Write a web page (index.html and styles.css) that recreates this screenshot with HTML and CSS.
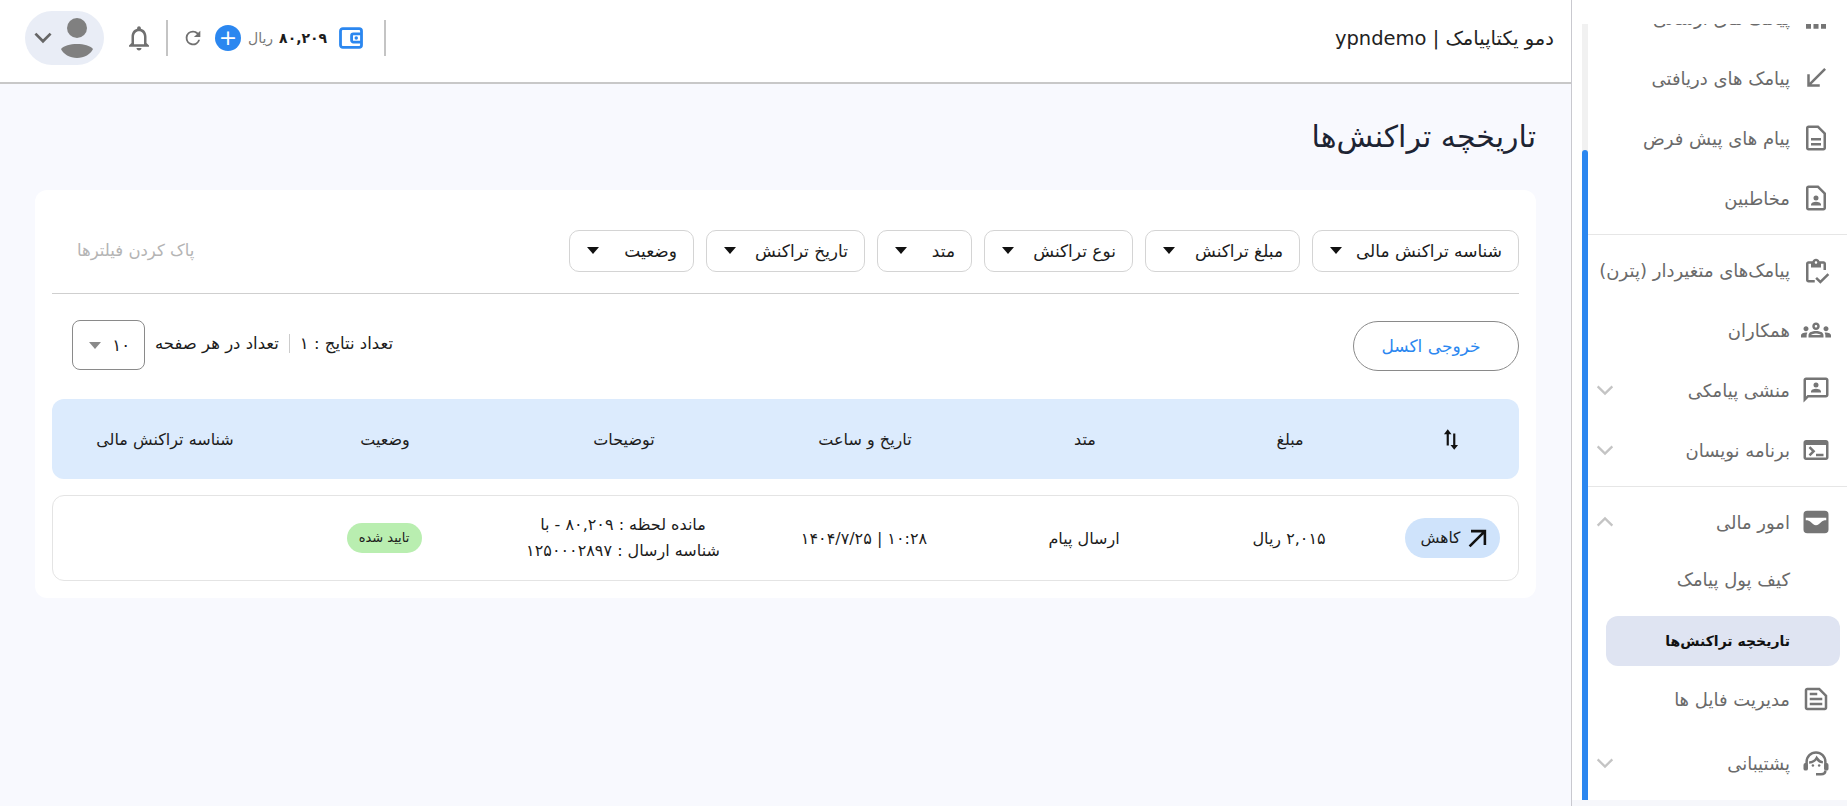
FILE: index.html
```html
<!DOCTYPE html>
<html lang="fa" dir="rtl">
<head>
  <meta charset="UTF-8" />
  <title>تاریخچه تراکنش‌ها</title>
  <link rel="stylesheet" href="styles.css">
</head>
<body>
  <div class="app">
    <aside class="sidebar">
      <div class="side-scroll">
        <div class="scroll-thumb"></div>
        <nav class="side-list">
          <div class="side-item cut">
            <svg class="ico" viewBox="0 0 24 24"><path d="M4 16.500h4v4H4zM10 16.500h4v4h-4zM16 16.500h4v4h-4z"/></svg>
            <span>پیامک های ارسالی</span>
          </div>
          <div class="side-item">
            <svg class="ico" viewBox="0 0 24 24"><path d="M20 5.410L18.590 4 7 15.590V9H5v10h10v-2H8.410z"/></svg>
            <span>پیامک های دریافتی</span>
          </div>
          <div class="side-item">
            <svg class="ico" viewBox="0 0 24 24"><path d="M8 16h8v2H8zm0-4h8v2H8zm6-10H6c-1.100 0-2 .9-2 2v16c0 1.100.89 2 1.990 2H18c1.100 0 2-.9 2-2V8l-6-6zm4 18H6V4h7.170L18 8.830V20z"/></svg>
            <span>پیام های پیش فرض</span>
          </div>
          <div class="side-item">
            <svg class="ico" viewBox="0 0 24 24"><path d="M14 2H6c-1.100 0-2 .9-2 2v16c0 1.100.9 2 2 2h12c1.100 0 2-.9 2-2V8l-6-6zM6 20V4h7.170L18 8.830V20H6zM12 14a2 2 0 1 0 0-4 2 2 0 0 0 0 4zm4 3.430c0-.81-.48-1.530-1.220-1.850A6.950 6.950 0 0 0 12 15c-.99 0-1.930.21-2.780.58A2.010 2.010 0 0 0 8 17.430V18h8v-.57z"/></svg>
            <span>مخاطبین</span>
          </div>
          <hr class="side-line">
          <div class="side-item">
            <svg class="ico" viewBox="0 0 24 24"><path d="M18 5h-3.200C14.400 3.800 13.300 3 12 3s-2.400.8-2.800 2H6c-1.100 0-2 .9-2 2v13c0 1.100.9 2 2 2h5v-2H6V7h2v3h8V7h2v5h2V7c0-1.100-.9-2-2-2zm-6 2c-.55 0-1-.45-1-1s.45-1 1-1 1 .45 1 1-.45 1-1 1zm3.500 13.200L12.800 17.500l-1.400 1.400 4.100 4.100 7.100-7.100-1.400-1.400z"/></svg>
            <span>پیامک‌های متغیردار (پترن)</span>
          </div>
          <div class="side-item">
            <svg class="ico" viewBox="0 0 24 24"><path d="M4 13c1.100 0 2-.9 2-2s-.9-2-2-2-2 .9-2 2 .9 2 2 2zm1.130 1.100c-.37-.06-.74-.1-1.130-.1-.99 0-1.930.21-2.780.58C.48 14.900 0 15.620 0 16.430V18h4.500v-1.610c0-.83.23-1.610.63-2.290zM20 13c1.100 0 2-.9 2-2s-.9-2-2-2-2 .9-2 2 .9 2 2 2zm4 3.430c0-.81-.48-1.530-1.220-1.850-.85-.37-1.790-.58-2.780-.58-.39 0-.76.04-1.130.1.4.68.63 1.460.63 2.290V18H24v-1.570zM16.240 13.650c-1.170-.52-2.610-.9-4.240-.9-1.630 0-3.070.39-4.240.9C6.680 14.130 6 15.210 6 16.390V18h12v-1.610c0-1.180-.68-2.260-1.760-2.740zM8.070 16c.09-.23.13-.39.91-.69.97-.38 1.990-.56 3.020-.56s2.050.18 3.020.56c.77.3.81.46.91.69H8.070zM12 8c.55 0 1 .45 1 1s-.45 1-1 1-1-.45-1-1 .45-1 1-1m0-2c-1.660 0-3 1.340-3 3s1.340 3 3 3 3-1.340 3-3-1.340-3-3-3z"/></svg>
            <span>همکاران</span>
          </div>
          <div class="side-item">
            <svg class="ico" viewBox="0 0 24 24"><path d="M20 2H4c-1.100 0-2 .9-2 2v18l4-4h14c1.100 0 2-.9 2-2V4c0-1.100-.9-2-2-2zm0 14H5.200L4 17.200V4h16v12zM12 10a2 2 0 1 0 0-4 2 2 0 0 0 0 4zm4 3.400c0-.8-.5-1.500-1.200-1.800a7 7 0 0 0-5.600 0c-.7.3-1.200 1-1.200 1.800v.6h8v-.6z"/></svg>
            <span>منشی پیامکی</span>
            <svg class="chev" viewBox="0 0 24 24"><path d="M4 8l8 8 8-8"/></svg>
          </div>
          <div class="side-item">
            <svg class="ico" viewBox="0 0 24 24"><path d="M20 4H4c-1.110 0-2 .9-2 2v12c0 1.100.89 2 2 2h16c1.100 0 2-.9 2-2V6c0-1.100-.89-2-2-2zm0 14H4V8h16v10zm-2-1h-6v-2h6v2zM7.500 17l-1.410-1.410L8.670 13l-2.590-2.590L7.500 9l4 4-4 4z"/></svg>
            <span>برنامه نویسان</span>
            <svg class="chev" viewBox="0 0 24 24"><path d="M4 8l8 8 8-8"/></svg>
          </div>
          <hr class="side-line">
          <div class="side-item">
            <svg class="ico" viewBox="0 0 24 24"><path fill-rule="evenodd" d="M5 3h14a3 3 0 0 1 3 3v12a3 3 0 0 1-3 3H5a3 3 0 0 1-3-3V6a3 3 0 0 1 3-3zM3.800 8.500v2c2 0 3 .5 4 1.500 1.500 1.500 2.600 2.500 4.200 2.500s2.700-1 4.200-2.500c1-1 2-1.500 4-1.500v-2z"/></svg>
            <span>امور مالی</span>
            <svg class="chev" viewBox="0 0 24 24"><path d="M4 16l8-8 8 8"/></svg>
          </div>
          <div class="side-item sub"><span>کیف پول پیامک</span></div>
          <div class="side-item sub active"><span>تاریخچه تراکنش‌ها</span></div>
          <div class="side-item after-active">
            <svg class="ico" viewBox="0 0 24 24"><path d="M19 3H5c-1.100 0-2 .9-2 2v14c0 1.100.9 2 2 2h14c1.100 0 2-.9 2-2V9l-6-6zm0 16H5V5h9.200L19 9.800V19zM7 11h10v2H7zm0 4h10v2H7zm0-8h6v2H7z"/></svg>
            <span>مدیریت فایل ها</span>
          </div>
          <div class="side-item last">
            <svg class="ico" viewBox="0 0 24 24"><path class="line" d="M4.500 17v-6a7.500 7.500 0 0 1 15 0v6M6.500 11.500c2.800 0 4.700-1.200 6-3.500 1.200 2 2.800 3.200 5 3.500M19.500 18c0 2-1.500 3-3.500 3h-4"/><rect x="2" y="12" width="3.500" height="6" rx="1.500"/><rect x="18.500" y="12" width="3.500" height="6" rx="1.500"/><circle cx="9.500" cy="14" r="1"/><circle cx="14.500" cy="14" r="1"/></svg>
            <span>پشتیبانی</span>
            <svg class="chev" viewBox="0 0 24 24"><path d="M4 8l8 8 8-8"/></svg>
          </div>
        </nav>
      </div>
    </aside>

    <main class="main">
      <header class="topbar">
        <div class="brand">دمو یکتاپیامک | ypndemo</div>
        <div class="tools">
          <span class="vline"></span>
          <svg class="wallet" viewBox="0 0 24 24"><rect x="3" y="4" width="18" height="16" rx="2" fill="none" stroke="#2b87f0" stroke-width="2.400"/><path d="M21 8.500h-7a1.500 1.500 0 0 0-1.500 1.500v4a1.500 1.500 0 0 0 1.500 1.500h7" fill="none" stroke="#2b87f0" stroke-width="2.400"/><circle cx="16.500" cy="12" r="1.500" fill="#2b87f0"/></svg>
          <div class="balance"><b>۸۰,۲۰۹</b><span>ریال</span></div>
          <span class="plus">+</span>
          <svg class="refresh" viewBox="0 0 24 24"><path d="M17.650 6.350A7.960 7.960 0 0 0 12 4a8 8 0 1 0 7.730 10h-2.080A6 6 0 1 1 12 6c1.660 0 3.140.69 4.220 1.780L13 11h7V4l-2.350 2.350z"/></svg>
          <span class="vline short"></span>
          <svg class="bell" viewBox="0 0 24 24"><path d="M12 22c1.100 0 2-.9 2-2h-4c0 1.100.9 2 2 2zm6-6v-5c0-3.070-1.630-5.640-4.500-6.320V4c0-.83-.67-1.500-1.500-1.500s-1.500.67-1.500 1.500v.68C7.640 5.360 6 7.920 6 11v5l-2 2v1h16v-1l-2-2zm-2 1H8v-6c0-2.480 1.510-4.500 4-4.500s4 2.020 4 4.500v6z"/></svg>
          <div class="avatar">
            <svg class="person" viewBox="0 0 32 40"><circle cx="16" cy="10" r="10"/><path d="M16 26c-7 0-13 1.500-16 5 2 5 9 9 16 9s14-4 16-9c-3-3.500-9-5-16-5z"/></svg>
            <svg class="avatar-chev" viewBox="0 0 24 24"><path d="M5 8l7 7 7-7"/></svg>
          </div>
        </div>
      </header>

      <section class="content">
        <h1 class="page-title">تاریخچه تراکنش‌ها</h1>
        <div class="card">
          <div class="filters">
            <div class="chip c1">شناسه تراکنش مالی<i></i></div>
            <div class="chip c2">مبلغ تراکنش<i></i></div>
            <div class="chip c3">نوع تراکنش<i></i></div>
            <div class="chip c4">متد<i></i></div>
            <div class="chip c5">تاریخ تراکنش<i></i></div>
            <div class="chip c6">وضعیت<i></i></div>
            <div class="clear">پاک کردن فیلترها</div>
          </div>
          <div class="tools-row">
            <button class="excel">خروجی اکسل</button>
            <div class="page-info">
              <span class="total">تعداد نتایج : ۱</span>
              <span class="per">تعداد در هر صفحه</span>
              <div class="per-select">۱۰<i></i></div>
            </div>
          </div>
          <div class="grid head">
            <div><svg class="sort" viewBox="0 0 24 24"><path d="M9 3L5.500 7.500H8V18h2V7.500h2.500zM15 22l3.500-4.500H16V7h-2v10.500h-2.500z"/></svg></div>
            <div>مبلغ</div>
            <div>متد</div>
            <div>تاریخ و ساعت</div>
            <div>توضیحات</div>
            <div>وضعیت</div>
            <div>شناسه تراکنش مالی</div>
          </div>
          <div class="grid row">
            <div>
              <span class="kind"><svg viewBox="0 0 24 24"><path d="M6 5v2.200h9.200L4 18.400 5.600 20 16.800 8.800V18H19V5z"/></svg>کاهش</span>
            </div>
            <div>۲,۰۱۵ ریال</div>
            <div>ارسال پیام</div>
            <div>۱۰:۲۸ | ۱۴۰۴/۷/۲۵</div>
            <div class="desc">مانده لحظه : ۸۰,۲۰۹ - با شناسه ارسال : ۱۲۵۰۰۰۲۸۹۷</div>
            <div><span class="status">تایید شده</span></div>
            <div></div>
          </div>
        </div>
      </section>
    </main>
  </div>
</body>
</html>
```

FILE: styles.css
```css
* {
  box-sizing: border-box;
}

html, body {
  margin: 0;
  height: 100%;
  overflow: hidden;
}

body {
  font-family: "DejaVu Sans", sans-serif;
  font-size: 16px;
  color: #1c1c1c;
  background: #fff;
}

.app {
  display: flex;
  height: 806px;
}

/* sidebar */
.sidebar {
  width: 276px;
  flex: none;
  border-left: 1px solid #c9c9cf;
  padding: 24px 0 6px 10px;
  background: linear-gradient(#fff 800px, #f6f7fb 800px);
}

.side-scroll {
  position: relative;
  height: 100%;
  overflow: hidden;
  padding-left: 6px;
  background: linear-gradient(#f1f1f1, #f1f1f1) left top / 6px 100% no-repeat;
}

.scroll-thumb {
  position: absolute;
  left: 0;
  top: 126px;
  bottom: 0;
  width: 6px;
  background: #2b87f0;
  border-radius: 3px 3px 0 0;
}

.side-list {
  margin-top: -36px;
}

.side-item {
  display: flex;
  align-items: center;
  height: 60px;
  padding: 0 16px 0 0;
  color: #6a6a6a;
  font-size: 18px;
}

.side-item span {
  flex: 1;
}

.ico {
  width: 30px;
  height: 30px;
  fill: #757575;
  flex: none;
  margin-left: 11px;
}

.ico .line {
  fill: none;
  stroke: #757575;
  stroke-width: 2;
}

.chev {
  width: 22px;
  height: 22px;
  fill: none;
  stroke: #c4c4c4;
  stroke-width: 2.5;
  flex: none;
  margin-left: 6px;
}

.side-line {
  border: 0;
  border-top: 1px solid #e6e6e6;
  margin: 6px 0 5px;
}

.side-item.sub {
  height: 54px;
  padding-right: 57px;
}

.side-item.active {
  height: 50px;
  width: 234px;
  margin: 10px 7px 3px 0;
  padding-right: 50px;
  background: #dfe4f2;
  border-radius: 12px;
  color: #111;
  font-size: 14px;
  font-weight: 700;
}

.side-item.last {
  margin-top: 4px;
}

/* main */
.main {
  flex: 1;
  min-width: 0;
  background: #f8f9fe;
  display: flex;
  flex-direction: column;
}

.topbar {
  height: 84px;
  flex: none;
  background: #fff;
  border-bottom: 2px solid #c8c8c8;
  display: flex;
  align-items: center;
  justify-content: space-between;
  padding: 0 17px 6px 25px;
}

.brand {
  font-size: 19.5px;
  color: #222;
}

.tools {
  display: flex;
  align-items: center;
}

.vline {
  width: 2px;
  height: 36px;
  background: #c4c4c4;
  margin-left: 19px;
}

.vline.short {
  margin: 0 14px 0 12px;
}

.wallet {
  width: 28px;
  height: 28px;
  margin-left: 10px;
}

.balance {
  display: flex;
  align-items: center;
  gap: 6px;
  margin-left: 7px;
  font-size: 14px;
}

.balance span {
  color: #777;
}

.plus {
  width: 26px;
  height: 26px;
  border-radius: 50%;
  background: #2b87f0;
  color: #fff;
  font-size: 22px;
  line-height: 25px;
  text-align: center;
  margin-left: 11px;
}

.refresh {
  width: 22px;
  height: 22px;
  fill: #707070;
}

.bell {
  width: 30px;
  height: 30px;
  fill: #707070;
  margin-left: 20px;
}

.avatar {
  width: 79px;
  height: 54px;
  border-radius: 27px;
  background: #e9edf6;
  display: flex;
  align-items: center;
  padding-right: 11px;
}

.person {
  width: 32px;
  height: 40px;
  fill: #808080;
}

.avatar-chev {
  width: 26px;
  height: 26px;
  fill: none;
  stroke: #666;
  stroke-width: 2.5;
  margin-right: 5px;
}

.content {
  padding: 0 35px;
}

.page-title {
  font-size: 30px;
  font-weight: 500;
  margin: 34px 0 34px;
  line-height: 38px;
  color: #1d2433;
}

.card {
  background: #fff;
  border-radius: 12px;
  padding: 40px 17px 17px 17px;
}

.filters {
  display: flex;
  align-items: center;
  gap: 12px;
  padding-bottom: 22px;
  border-bottom: 1px solid #cfcfcf;
  height: 64px;
}

.chip {
  height: 42px;
  border: 1px solid #d4d4d4;
  border-radius: 10px;
  display: flex;
  align-items: center;
  justify-content: space-between;
  padding: 0 16px 0 17px;
  font-size: 17px;
  background: #fff;
  white-space: nowrap;
}

.chip i {
  width: 0;
  height: 0;
  border: 6.5px solid transparent;
  border-top: 7px solid #111;
  border-bottom: 0;
}

.c1 { width: 207px; }
.c2 { width: 155px; }
.c3 { width: 149px; }
.c4 { width: 95px; }
.c5 { width: 159px; }
.c6 { width: 125px; }

.clear {
  margin-right: auto;
  margin-left: 25px;
  color: #b4b4b4;
  font-size: 16.5px;
}

.tools-row {
  display: flex;
  align-items: flex-start;
  justify-content: space-between;
  padding: 27px 0 28px 20px;
}

.excel {
  width: 166px;
  height: 50px;
  padding: 0 10px 0 0;
  border-radius: 25px;
  border: 1px solid #8a8a8a;
  background: #fff;
  color: #2b87f0;
  font: inherit;
  font-size: 17px;
}

.page-info {
  display: flex;
  align-items: center;
  height: 50px;
  margin-top: -1px;
  font-size: 16.5px;
}

.total {
  padding-left: 10px;
  border-left: 1px solid #ccc;
  margin-left: 10px;
  margin-bottom: 4px;
}

.per {
  margin-left: 10px;
  margin-bottom: 4px;
}

.per-select {
  width: 73px;
  height: 50px;
  border: 1px solid #8a8a8a;
  border-radius: 8px;
  display: flex;
  align-items: center;
  justify-content: space-between;
  padding: 0 14px 0 16px;
}

.per-select i {
  width: 0;
  height: 0;
  border: 6.5px solid transparent;
  border-top: 7px solid #8a8a8a;
  border-bottom: 0;
}

.grid {
  display: grid;
  grid-template-columns: 136px 186px 224px 216px 266px 212px 228px;
  align-items: center;
  text-align: center;
}

.head {
  height: 80px;
  background: #dcebfd;
  border-radius: 12px;
}

.row {
  height: 86px;
  margin-top: 16px;
  border: 1px solid #e4e4e4;
  border-radius: 12px;
}

.sort {
  width: 26px;
  height: 26px;
  fill: #111;
  vertical-align: middle;
}

.kind {
  display: inline-flex;
  align-items: center;
  gap: 3px;
  height: 40px;
  width: 95px;
  margin-right: -4px;
  padding-right: 8px;
  border-radius: 20px;
  background: #cfe3fb;
  font-size: 15.5px;
}

.kind svg {
  width: 28px;
  height: 28px;
  fill: #111;
}

.desc {
  width: 210px;
  margin: 0 auto;
  line-height: 26px;
}

.status {
  display: inline-block;
  width: 75px;
  height: 30px;
  line-height: 29px;
  border-radius: 15px;
  background: #b9eeb0;
  font-size: 13px;
  white-space: nowrap;
}
```
